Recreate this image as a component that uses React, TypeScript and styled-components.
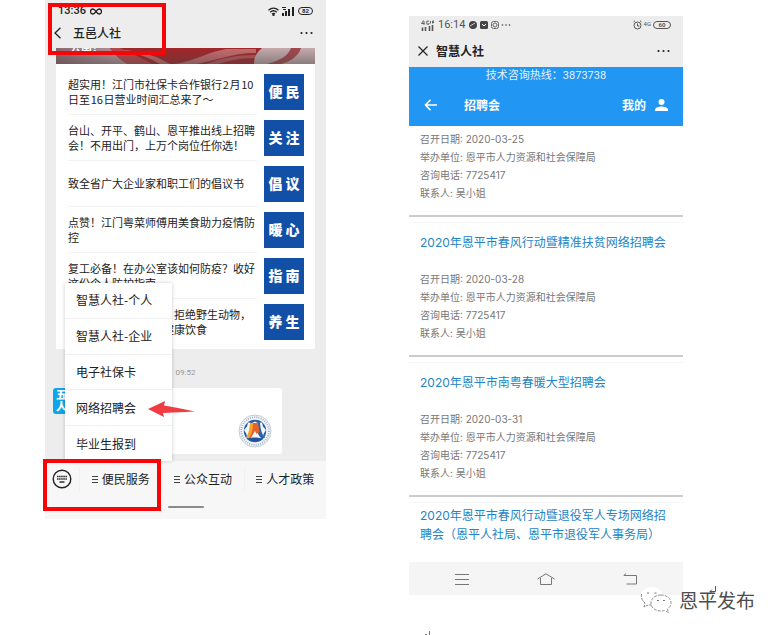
import React from "react";
import styled, { createGlobalStyle } from "styled-components";

const Global = createGlobalStyle`
  * { box-sizing: border-box; }
  body { margin: 0; background: #fff; font-family: "Noto Sans CJK SC", sans-serif; color: #222; }
  button { border: 0; padding: 0; margin: 0; background: none; font: inherit; color: inherit; cursor: pointer; }
  a { color: inherit; text-decoration: none; }
  h1, h2, p, ul { margin: 0; padding: 0; font: inherit; }
  ul { list-style: none; }
  svg { display: block; flex: none; }
`;

const Page = styled.main`
  position: relative;
  display: grid;
  grid-template-columns: 281fr 274fr;
  align-items: start;
  column-gap: 83px;
  padding: 0 97px 40px 45px;
  overflow: hidden;
`;

const Phone = styled.section<{ $top?: number }>`
  position: relative;
  margin-top: ${(p) => p.$top ?? 0}px;
  background: #ededed;
`;

const StatusBar = styled.div<{ $light?: boolean }>`
  display: flex;
  align-items: center;
  justify-content: space-between;
  height: ${(p) => (p.$light ? 18 : 22)}px;
  padding: ${(p) => (p.$light ? "0 12px" : "0 13px")};
  font: ${(p) => (p.$light ? 400 : 500)} 11px/14px Roboto, sans-serif;
  color: ${(p) => (p.$light ? "#555" : "#222")};
`;

const Group = styled.div<{ $gap?: number }>`
  display: flex;
  align-items: center;
  gap: ${(p) => p.$gap ?? 4}px;
`;

const Battery = styled.span<{ $light?: boolean }>`
  width: ${(p) => (p.$light ? 18 : 15)}px;
  height: 8px;
  border: 1px solid currentColor;
  border-radius: 4px;
  font-size: 6px;
  line-height: 6px;
  font-weight: 700;
  text-align: center;
`;

const Tiny = styled.span`
  font-size: 6px;
  line-height: 8px;
  align-self: flex-start;
`;

const NavBar = styled.header<{ $tall?: boolean }>`
  display: flex;
  align-items: center;
  justify-content: space-between;
  height: ${(p) => (p.$tall ? 33 : 26)}px;
  padding: 0 13px 0 9px;
  font-size: 12px;
  line-height: 18px;
  font-weight: ${(p) => (p.$tall ? 700 : 500)};
  ${(p) => !p.$tall && "padding-bottom: 4px;"}
`;

const Chat = styled.div`
  padding: 0 11px 7px;
`;

const Card = styled.div`
  background: #fff;
  padding-bottom: 4px;
`;

const Banner = styled.div`
  position: relative;
  height: 16px;
  margin-bottom: 5px;
  overflow: hidden;
  svg { width: 100%; height: 16px; }
`;

const BannerText = styled.span`
  position: absolute;
  left: 14px;
  bottom: 10px;
  font-size: 11px;
  line-height: 14px;
  font-weight: 700;
  color: #fff;
`;

const Article = styled.a`
  display: flex;
  align-items: center;
  justify-content: space-between;
  height: 46px;
  margin: 0 11px 0 12px;
`;

const ArticleText = styled.span<{ $beside?: boolean }>`
  display: flex;
  align-items: center;
  width: 189px;
  height: 46px;
  border-bottom: 1px solid ${(p) => (p.$beside ? "transparent" : "#f3f3f3")};
  padding-left: ${(p) => (p.$beside ? 95 : 0)}px;
  text-indent: ${(p) => (p.$beside ? 11 : 0)}px;
  font-size: 11px;
  line-height: 15px;
  white-space: pre;
`;

const Thumb = styled.span`
  width: 40px;
  height: 36px;
  background: #124fa6;
  color: #fff;
  font-size: 14px;
  line-height: 35px;
  font-weight: 900;
  text-align: center;
`;

const Time = styled.time`
  display: block;
  padding: 17px 0 9px;
  text-align: center;
  font: 8px/13px Roboto, sans-serif;
  color: #999;
`;

const Message = styled.div`
  display: flex;
  margin-left: -3px;
`;

const Avatar = styled.div`
  width: 26px;
  height: 26px;
  border-radius: 3px;
  background: #0ea5ea;
  color: #fff;
  padding-left: 3px;
  font-size: 11px;
  line-height: 12px;
  font-weight: 900;
`;

const Bubble = styled.div`
  display: flex;
  flex: 1;
  align-items: flex-end;
  justify-content: flex-end;
  height: 66px;
  margin: 0 33px 0 8px;
  padding: 0 10px 6px;
  border-radius: 3px;
  background: #fff;
`;

const Dock = styled.footer`
  position: relative;
  background: #f7f7f7;
`;

const Tabs = styled.div`
  display: grid;
  grid-template-columns: 34px 1fr 1fr 1fr;
  align-items: center;
  height: 36px;
`;

const Tab = styled.button`
  display: flex;
  align-items: center;
  justify-content: center;
  gap: 4px;
  height: 24px;
  font-size: 12px;
  line-height: 18px;
  & + & { border-left: 1px solid #f0f0f0; }
`;

const HomeZone = styled.div`
  display: flex;
  justify-content: center;
  padding: 9px 0 11px;
`;

const HomeBar = styled.span`
  width: 36px;
  height: 2px;
  border-radius: 1px;
  background: #8b8b8b;
`;

const Menu = styled.ul`
  position: absolute;
  left: 20px;
  bottom: 100%;
  display: grid;
  width: 107px;
  height: 178px;
  background: #fff;
  box-shadow: 0 0 4px rgba(0, 0, 0, 0.2);
`;

const MenuItem = styled.li`
  display: grid;
  & + & { border-top: 1px solid #f0f0f0; }
  button {
    padding-left: 11px;
    text-align: left;
    font-size: 12px;
    line-height: 18px;
  }
`;

const Mark = styled.div<{ $left: number; $top: number; $height: number }>`
  position: absolute;
  left: ${(p) => p.$left}px;
  top: ${(p) => p.$top}px;
  width: 118px;
  height: ${(p) => p.$height}px;
  border: 4px solid #f60509;
  pointer-events: none;
`;

const Pointer = styled.svg`
  position: absolute;
  left: 103px;
  bottom: calc(100% + 43px);
`;

const AppHeader = styled.div`
  height: 59px;
  background: #2196f3;
  color: #fff;
`;

const Hotline = styled.p`
  font: 11px/17px Roboto, "Noto Sans CJK SC", sans-serif;
  text-align: center;
  color: #e2f1fd;
`;

const AppBar = styled.div`
  display: flex;
  align-items: center;
  justify-content: space-between;
  height: 42px;
  padding: 0 15px;
  font-size: 12px;
  line-height: 18px;
  font-weight: 700;
`;

const Feed = styled.div`
  background: #fff;
`;

const Job = styled.article<{ $tight?: boolean; $first?: boolean }>`
  margin-bottom: ${(p) => (p.$tight ? 0 : 6)}px;
  padding: ${(p) => (p.$first ? "4px 11px 13px" : p.$tight ? "3px 11px 18px" : "10px 11px 13px")};
  border-bottom: ${(p) => (p.$tight ? 0 : 2)}px solid #ccc;
  ${(p) => !p.$first && "box-shadow: 0 -1px 0 #f6f6f6;"}
`;

const JobTitle = styled.h2<{ $gap?: boolean }>`
  font: 12px/19px Inter, "Noto Sans CJK SC", sans-serif;
  color: #2385c6;
  white-space: pre;
  margin-bottom: ${(p) => (p.$gap ? 18 : 0)}px;
`;

const Detail = styled.p`
  font: 10px/18px Inter, "Noto Sans CJK SC", sans-serif;
  color: #777;
`;

const SystemNav = styled.nav`
  display: flex;
  align-items: center;
  justify-content: space-between;
  height: 33px;
  padding: 0 46px;
  background: #f5f5f5;
`;

const Watermark = styled.div`
  position: absolute;
  right: 25px;
  top: 586px;
  display: flex;
  align-items: center;
  gap: 7px;
  font-size: 19px;
  line-height: 28px;
  color: #4c4c4c;
`;

const Stray = styled.svg<{ $left: number; $top: number }>`
  position: absolute;
  left: ${(p) => p.$left}px;
  top: ${(p) => p.$top}px;
`;

const articles = [
  ["超实用！江门市社保卡合作银行\u200a2\u200a月\u200a10\n日至\u200a16\u200a日营业时间汇总来了～", "便 民"],
  ["台山、开平、鹤山、恩平推出线上招聘\n会！不用出门，上万个岗位任你选！", "关 注"],
  ["致全省广大企业家和职工们的倡议书", "倡 议"],
  ["点赞！江门粤菜师傅用美食助力疫情防\n控", "暖 心"],
  ["复工必备！在办公室该如何防疫？收好\n这份个人防护指南", "指 南"],
  ["拒绝野生动物，\n健康饮食", "养 生"],
];

const menu = ["智慧人社-个人", "智慧人社-企业", "电子社保卡", "网络招聘会", "毕业生报到"];
const tabs = ["便民服务", "公众互动", "人才政策"];

const jobs = [
  { title: "", date: "2020-03-25" },
  { title: "2020年恩平市春风行动暨精准扶贫网络招聘会", date: "2020-03-28" },
  { title: "2020年恩平市南粤春暖大型招聘会", date: "2020-03-31" },
];

const Dots = () => (
  <svg width="13" height="4" viewBox="0 0 13 4" fill="#222">
    <circle cx="1.5" cy="2" r="1.1" /><circle cx="6.5" cy="2" r="1.1" /><circle cx="11.5" cy="2" r="1.1" />
  </svg>
);

const Signal = () => (
  <svg width="13" height="10" viewBox="0 0 13 10" fill="currentColor">
    <path d="M0 7h2v3H0zM3 5h2v5H3zM6 3h2v7H6zM10 1h2v9h-2zM0 1h4v1H0zM1 3h3v1H1z" />
  </svg>
);

const CellularSignal = () => (
  <svg width="13" height="11" viewBox="0 0 13 11" fill="none" stroke="currentColor">
    <path d="M1.500 7.500V11M4.500 7V11M8.500 6V11M11.500 5V11" strokeWidth="1.600" />
    <path d="M2.500.5L.5 3.500h3M3 1v4M8 1.200H5.800v3H8V3M9.500 1v2.500M11.500 3.500V1H13v1.500h-1.500" strokeWidth=".9" />
  </svg>
);

const Emblem = () => (
  <svg width="34" height="34" viewBox="0 0 34 34">
    <circle cx="17" cy="17" r="16" fill="#f4f7fa" stroke="#b4bfcc" strokeWidth=".8" />
    <circle cx="17" cy="17" r="13.800" fill="none" stroke="#a0afc2" strokeWidth="1.800" strokeDasharray="1 1.200" />
    <circle cx="17" cy="17" r="11.200" fill="#2a5b9f" />
    <path d="M17 7.500l3 1.500 4-.5 1 4 3 3.500-2.500 4-.5 4-4.500.5L17 26.500l-3.500-2L9 24l-.5-4L6 16l3-3.500 1-4 4 .5z" fill="#f3f8fd" />
    <path d="M12 9h5l-1.500 8-5 7H8c3-5 3.500-10 4-15z" fill="#f5a32b" />
    <path d="M18 9h4c.5 6 1.500 11 5 15h-4c-4-4-4.500-9-5-15z" fill="#2c63ae" />
    <path d="M15 9h5l1.500 9-3 2-1.500-3-4 7h-2.500c4-5 4.500-10 4.500-15z" fill="#e8632b" />
    <path d="M9 25c5-2 11-2 16 0-5 3-11 3-16 0z" fill="#23549b" />
  </svg>
);

export default function App() {
  return (
    <>
      <Global />
      <Page>
        <Phone>
          <StatusBar>
            <Group>
              <span>13:36</span>
              <svg width="12" height="7" viewBox="0 0 12 7" fill="none" stroke="currentColor" strokeWidth="1.3">
                <path d="M6 3.5C4.5 1.5 3.8 1 3 1a2.4 2.4 0 000 5c.8 0 1.500-.5 3-2.500S8.200 1 9 1a2.400 2.400 0 010 5c-.8 0-1.500-.5-3-2.500z" />
              </svg>
            </Group>
            <Group $gap={3}>
              <svg width="11" height="9" viewBox="0 0 11 9" fill="none" stroke="currentColor" strokeWidth="1.3">
                <path d="M.5 3.200c3-2.700 7-2.700 10 0M2.200 5.200c2-1.800 4.600-1.800 6.600 0M4 7c1-.8 2-.8 3 0" />
                <circle cx="5.500" cy="8" r=".5" />
              </svg>
              <Signal />
              <Battery>82</Battery>
            </Group>
          </StatusBar>
          <NavBar>
            <Group $gap={12}>
              <button aria-label="返回">
                <svg width="7" height="12" viewBox="0 0 7 12" fill="none" stroke="#222" strokeWidth="1.300"><path d="M6.500.7L1 6l5.500 5.300" /></svg>
              </button>
              <h1>五邑人社</h1>
            </Group>
            <button aria-label="更多"><Dots /></button>
          </NavBar>
          <Chat>
            <Card>
              <Banner>
                <svg viewBox="0 0 259 16" preserveAspectRatio="none">
                  <defs>
                    <linearGradient id="mist"><stop offset="0" stopColor="#8f686e" /><stop offset="1" stopColor="#b99da0" /></linearGradient>
                    <linearGradient id="shade" x2="0" y2="1"><stop offset="0" stopColor="#444" stopOpacity="0" /><stop offset="1" stopColor="#444" stopOpacity=".45" /></linearGradient>
                  </defs>
                  <path d="M0 0h259v16H0z" fill="#a3262a" />
                  <path d="M0 0h54c4 6 10 12 18 16H0z" fill="url(#mist)" />
                  <path d="M54 0h10c12 6 22 10 32 16H72C64 11 58 6 54 0z" fill="#b9494c" />
                  <path d="M66 2c20 1 34 6 48 14h-10C92 9 80 5 66 2zM118 16c18-2 34-12 52-15h30v4c-24 0-42 8-60 11z" fill="#c86b6d" />
                  <path d="M150 16c16-6 30-9 50-9v3c-16 0-28 3-38 6z" fill="#bd5558" />
                  <path d="M206 0h53v16h-61c0-6 2-11 8-16z" fill="#c5abad" />
                  <path d="M235 0h10c-2 7-9 13-20 16h-14c14-4 21-8 24-16z" fill="#a4484d" />
                  <path d="M0 0h259v16H0z" fill="url(#shade)" />
                </svg>
                <BannerText>去南！</BannerText>
              </Banner>
              {articles.map(([text, tag], i) => (
                <Article href="#" key={tag}>
                  <ArticleText $beside={i === articles.length - 1}>{text}</ArticleText>
                  <Thumb>{tag}</Thumb>
                </Article>
              ))}
            </Card>
            <Time>09:52</Time>
            <Message>
              <Avatar>五邑人社</Avatar>
              <Bubble><Emblem /></Bubble>
            </Message>
          </Chat>
          <Dock>
            <Tabs>
              <Tab aria-label="键盘">
                <svg width="20" height="20" viewBox="0 0 20 20" fill="none" stroke="#222">
                  <circle cx="10" cy="10" r="8.800" strokeWidth="1.400" />
                  <path d="M5 7.500h10M5 10h10" strokeWidth="1.500" strokeDasharray="1.500 .6" />
                  <path d="M7.500 13h5" strokeWidth="1.400" />
                </svg>
              </Tab>
              {tabs.map((t) => (
                <Tab key={t}>
                  <svg width="6" height="7" viewBox="0 0 6 7" stroke="#444"><path d="M0 .5h6M0 3.500h6M0 6.500h6" /></svg>
                  {t}
                </Tab>
              ))}
            </Tabs>
            <HomeZone><HomeBar /></HomeZone>
            <Menu>
              {menu.map((m) => <MenuItem key={m}><button>{m}</button></MenuItem>)}
            </Menu>
            <Pointer width="48" height="18" viewBox="0 0 48 18">
              <path d="M0 9L17 1l-1 4.500L30 8l17 3.500L15 13l1 4z" fill="#f03b40" />
            </Pointer>
            <Mark $left={-2} $top={-2} $height={52} />
          </Dock>
          <Mark $left={3} $top={3} $height={52} />
        </Phone>

        <Phone $top={16}>
          <StatusBar $light>
            <Group $gap={4}>
              <CellularSignal />
              <span>16:14</span>
              <svg width="42" height="10" viewBox="0 0 42 10" fill="#444">
                <circle cx="4" cy="5" r="4" /><path d="M1 6l5-3" stroke="#ccc" />
                <rect x="11" y="1" width="8" height="8" rx="1.500" /><path d="M13 4l2 2 2-2" stroke="#fff" fill="none" />
                <rect x="22.500" y="1.500" width="7" height="7" rx="2" fill="none" stroke="#666" /><circle cx="26" cy="5" r="2" fill="none" stroke="#666" />
                <circle cx="33.500" cy="5" r=".8" /><circle cx="37" cy="5" r=".8" /><circle cx="40.500" cy="5" r=".8" />
              </svg>
            </Group>
            <Group $gap={2}>
              <svg width="9" height="10" viewBox="0 0 9 10" fill="none" stroke="currentColor"><circle cx="4.500" cy="5.500" r="3.500" /><path d="M4.500 3.500v2.500h2M.5 2L2 .7M8.500 2L7 .7" /></svg>
              <Tiny>4G</Tiny>
              <Battery $light>60</Battery>
            </Group>
          </StatusBar>
          <NavBar $tall>
            <Group $gap={8}>
              <button aria-label="关闭">
                <svg width="10" height="10" viewBox="0 0 10 10" stroke="#222" strokeWidth="1.200"><path d="M.5.5l9 9M9.500.5l-9 9" /></svg>
              </button>
              <h1>智慧人社</h1>
            </Group>
            <button aria-label="更多"><Dots /></button>
          </NavBar>
          <AppHeader>
            <Hotline>技术咨询热线：3873738</Hotline>
            <AppBar>
              <Group $gap={27}>
                <button aria-label="返回">
                  <svg width="13" height="12" viewBox="0 0 13 12" fill="none" stroke="#fff" strokeWidth="1.600"><path d="M6.500.8L1.500 6l5 5.200M1.500 6H13" /></svg>
                </button>
                <span>招聘会</span>
              </Group>
              <Tab as="a" href="#">
                <Group $gap={9}>
                  我的
                  <svg width="13" height="12" viewBox="0 0 13 12" fill="#fff"><circle cx="6.500" cy="3" r="3" /><path d="M0 12v-1.500C0 8.500 4 7.400 6.500 7.400S13 8.500 13 10.500V12z" /></svg>
                </Group>
              </Tab>
            </AppBar>
          </AppHeader>
          <Feed>
            {jobs.map((j) => (
              <Job key={j.date} $first={!j.title}>
                {j.title && <JobTitle $gap>{j.title}</JobTitle>}
                <Detail>召开日期: {j.date}</Detail>
                <Detail>举办单位: 恩平市人力资源和社会保障局</Detail>
                <Detail>咨询电话: 7725417</Detail>
                <Detail>联系人: 吴小姐</Detail>
              </Job>
            ))}
            <Job $tight>
              <JobTitle>{"2020年恩平市春风行动暨退役军人专场网络招\n聘会（恩平人社局、恩平市退役军人事务局）"}</JobTitle>
            </Job>
          </Feed>
          <SystemNav>
            <button aria-label="菜单"><svg width="14" height="12" viewBox="0 0 14 12" stroke="#777"><path d="M0 1.500h14M0 6.500h14M0 11.500h14" /></svg></button>
            <button aria-label="主页"><svg width="18" height="12" viewBox="0 0 18 12" fill="none" stroke="#777"><path d="M.5 6L9 .8 17.500 6M3.500 5v6.500h11V5" /></svg></button>
            <button aria-label="后退"><svg width="14" height="12" viewBox="0 0 14 12" fill="none" stroke="#777"><path d="M3 .5L.8 2.500H13.500v8.500H3.500" /></svg></button>
          </SystemNav>
        </Phone>

        <Watermark>
          <svg width="32" height="28" viewBox="0 0 32 28" fill="#fff">
            <path d="M12 1C5.500 1 1 5 1 10c0 3 1.500 5.500 4 7l-1 4 4-2c7 2 15-2 15-9 0-5-5-9-11-9z" />
            <path d="M1.500 8c-.8 4 1 7 3.500 9l-1 4 4-2h4" fill="none" stroke="#777" strokeWidth=".9" strokeDasharray="3 1" />
            <path d="M21 9c-6 0-10 3.500-10 8s4 8 10 8c1 0 2.500-.2 3.500-.5l4 2-1-3.500c2-1.500 3.500-3.500 3.500-6 0-4.500-4-8-10-8z" stroke="#888" strokeWidth=".9" strokeDasharray="3 1.200" />
            <path d="M7 7h2M14.500 7h2M17 14.500h2M23 14.500h2" stroke="#777" strokeWidth="1.200" />
          </svg>
          恩平发布
        </Watermark>
        <Stray $left={709} $top={586} width="8" height="8" viewBox="0 0 8 8" fill="none" stroke="#555"><path d="M6.500 0v5.500H1M3 3.500l-2 2 2 2" /></Stray>
        <Stray $left={424} $top={631} width="8" height="4" viewBox="0 0 8 4" fill="none" stroke="#777"><path d="M5.500 0v4M1 3.500h2" /></Stray>
      </Page>
    </>
  );
}
